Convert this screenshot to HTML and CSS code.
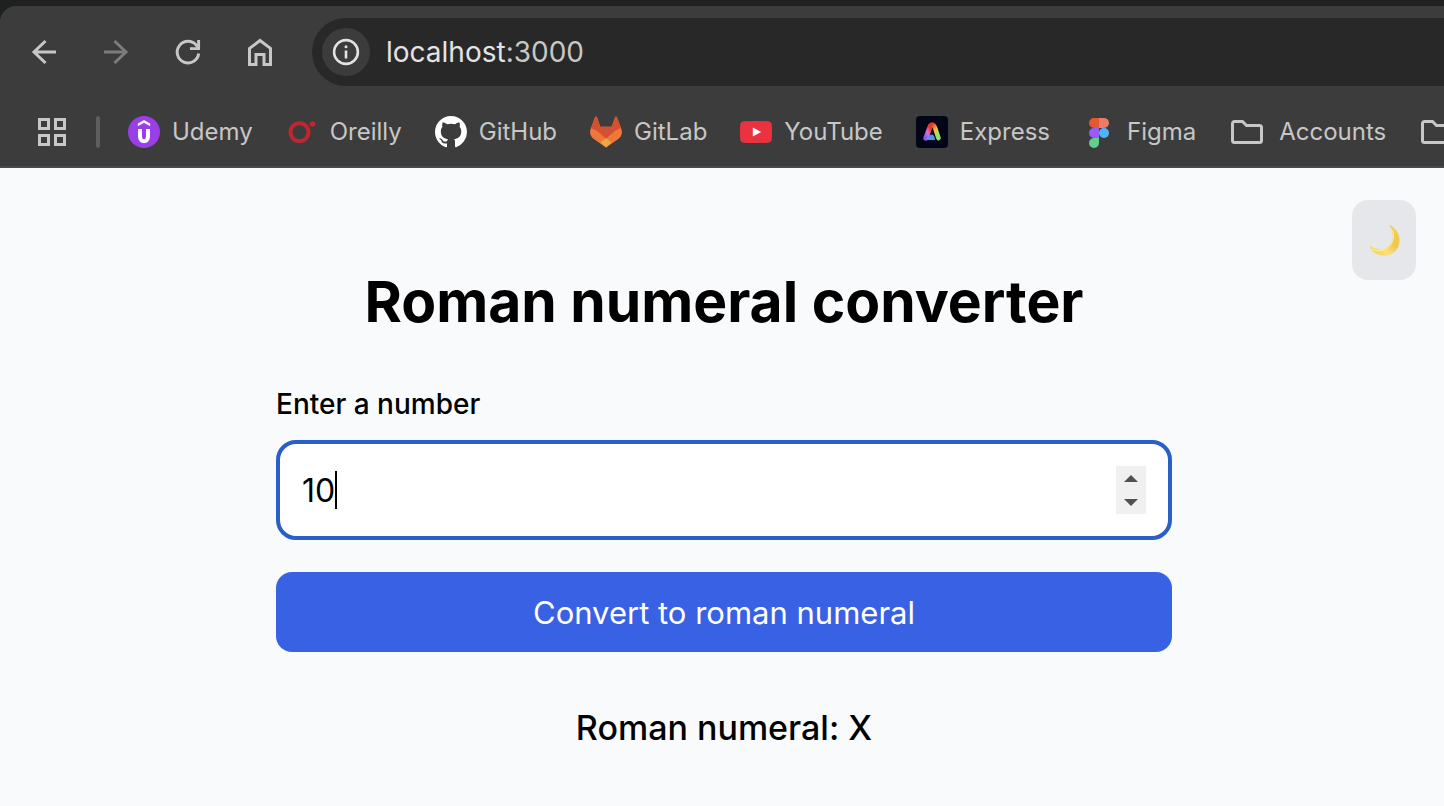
FILE: index.html
```html
<!DOCTYPE html>
<html lang="en">
<head>
<meta charset="utf-8">
<title>Roman numeral converter</title>
<link rel="stylesheet" href="styles.css">
</head>
<body>
<header class="browser">
  <div class="browser-panel">
    <div class="toolbar">
      <button class="nav-button" type="button" aria-label="Back">
        <svg width="32" height="32" viewBox="0 0 32 32" fill="none" stroke="currentColor" stroke-width="3"><path d="M28 16H6M17.500 5 6 16l11.500 11"/></svg>
      </button>
      <button class="nav-button nav-button-off" type="button" aria-label="Forward" disabled>
        <svg width="32" height="32" viewBox="0 0 32 32" fill="none" stroke="currentColor" stroke-width="3"><path d="M4 16h22M14.500 5 26 16 14.500 27"/></svg>
      </button>
      <button class="nav-button" type="button" aria-label="Reload">
        <svg width="32" height="32" viewBox="0 0 32 32" fill="none" stroke="currentColor" stroke-width="2.900"><path d="M26.700 17.500A10.800 10.800 0 1 1 24.600 9.600L26.500 12"/><path d="M26.600 4v8.600H18"/></svg>
      </button>
      <button class="nav-button" type="button" aria-label="Home">
        <svg width="32" height="32" viewBox="0 0 32 32" fill="none" stroke="currentColor" stroke-width="3"><path d="M5.500 28.500V12.400L16 4.500l10.500 7.900v16.100h-6.500V18.500h-8v10z"/></svg>
      </button>
      <div class="address">
        <span class="site-info">
          <svg width="28" height="28" viewBox="0 0 28 28" fill="none" stroke="currentColor"><circle cx="14" cy="14" r="11.900" stroke-width="2.600"/><path d="M14 12.500v8" stroke-width="2.600"/><circle cx="14" cy="8.800" r="1.500" fill="currentColor" stroke="none"/></svg>
        </span>
        <span class="url">localhost<span class="port">:3000</span></span>
      </div>
    </div>
    <nav class="bookmarks" aria-label="Bookmarks">
      <button class="apps" type="button" aria-label="Apps">
        <svg width="28" height="28" viewBox="0 0 28 28" fill="none" stroke="currentColor" stroke-width="3"><path d="M1.500 1.500h9v9h-9zM17.500 1.500h9v9h-9zM1.500 17.500h9v9h-9zM17.500 17.500h9v9h-9z"/></svg>
      </button>
      <span class="divider"></span>
      <a class="bookmark" href="#">
        <svg width="32" height="32" viewBox="0 0 32 32"><circle cx="16" cy="16" r="16" fill="#9a3fe8"/><path d="M10 9.800V7.800l6-3.500 6 3.500v2l-6-3.200z" fill="#fff" stroke="#fff" stroke-width=".5"/><path d="M12 13v7.500c0 6.300 8 6.300 8 0V13" fill="none" stroke="#fff" stroke-width="4"/></svg>
        <span>Udemy</span></a>
      <a class="bookmark" href="#">
        <svg width="32" height="32" viewBox="0 0 32 32"><circle cx="13.500" cy="16.200" r="9" fill="none" stroke="#be2732" stroke-width="4"/><circle cx="26.500" cy="8" r="2.800" fill="#be2732"/></svg>
        <span>Oreilly</span></a>
      <a class="bookmark" href="#">
        <svg width="32" height="32" viewBox="0 0 16 16" fill="#fff"><path d="M8 0C3.580 0 0 3.580 0 8c0 3.540 2.290 6.530 5.470 7.590.4.070.55-.17.55-.38 0-.19-.01-.82-.01-1.490-2.010.37-2.530-.49-2.690-.94-.09-.23-.48-.94-.82-1.130-.28-.15-.68-.52-.01-.53.63-.01 1.080.58 1.230.82.72 1.210 1.870.87 2.330.66.07-.52.28-.87.51-1.070-1.780-.2-3.640-.89-3.640-3.950 0-.87.31-1.590.82-2.150-.08-.2-.36-1.020.08-2.120 0 0 .67-.21 2.200.82a7.600 7.600 0 0 1 4 0c1.530-1.040 2.200-.82 2.200-.82.44 1.100.16 1.920.08 2.120.51.56.82 1.270.82 2.150 0 3.070-1.870 3.750-3.650 3.950.29.25.54.73.54 1.480 0 1.070-.01 1.930-.01 2.200 0 .21.15.46.55.38A8.010 8.010 0 0 0 16 8c0-4.420-3.580-8-8-8z"/></svg>
        <span>GitHub</span></a>
      <a class="bookmark" href="#">
        <svg width="32" height="32" viewBox="0 0 32 32"><path d="M1 12 5 1.200Q6 0 7 1.200L10.300 10.700h11.400L25 1.200q1-1.200 2 0L31 12q3 7-3.500 11.500L16 31.500 4.500 23.500Q-2 19 1 12z" fill="#ee7739"/><path d="M1 12 5 1.200Q6 0 7 1.200L10.300 10.700h11.400L25 1.200q1-1.200 2 0L31 12l-5.500 2.500L16 22.500 6.500 14.500z" fill="#d35033"/><path d="m16 22.300 5.500 4.200L16 31.500l-5.500-5z" fill="#eea743"/></svg>
        <span>GitLab</span></a>
      <a class="bookmark" href="#">
        <svg width="32" height="32" viewBox="0 0 32 32"><path d="M4 5.300Q16 4.700 28 5.300q3.500.2 3.800 4 .4 6.700 0 13.400-.3 3.800-3.800 4-12 .6-24 0-3.500-.2-3.800-4-.4-6.700 0-13.400.3-3.800 3.800-4z" fill="#ea333f"/><path d="m12.800 11.500 8.400 4.500-8.400 4.500z" fill="#fff"/></svg>
        <span>YouTube</span></a>
      <a class="bookmark" href="#">
        <svg width="32" height="32" viewBox="0 0 32 32"><defs><linearGradient id="ex-left" x1="0" y1="1" x2=".6" y2="0"><stop offset="0" stop-color="#815be8"/><stop offset=".5" stop-color="#e56be0"/><stop offset="1" stop-color="#eb3325"/></linearGradient><linearGradient id="ex-right" x1="0" y1="0" x2=".6" y2="1"><stop offset="0" stop-color="#eb3325"/><stop offset=".55" stop-color="#f5c542"/><stop offset="1" stop-color="#8be86a"/></linearGradient></defs><rect width="32" height="32" rx="4" fill="#020618"/><path d="M9.800 22.200 14.600 9.500" stroke="url(#ex-left)" stroke-width="5" stroke-linecap="round" fill="none"/><path d="M16 8.500c2.500 0 3.500 5 6.500 13.600" stroke="url(#ex-right)" stroke-width="4.600" stroke-linecap="round" fill="none"/><path d="M10 24c1-2.500 3-5.500 5.500-5.500 2 0 3.500 2 3.500 5.500z" fill="#5a8ded"/></svg>
        <span>Express</span></a>
      <a class="bookmark" href="#">
        <svg width="32" height="32" viewBox="0 0 32 32"><path d="M16 2h-5a5 5 0 0 0 0 10h5z" fill="#e35932"/><path d="M16 2h5a5 5 0 0 1 0 10h-5z" fill="#ee7b69"/><path d="M16 12h-5a5 5 0 0 0 0 10h5z" fill="#985cf6"/><circle cx="21" cy="17" r="5" fill="#50b4f9"/><path d="M11 22h5v5a5 5 0 1 1-5-5z" fill="#62cf8a"/></svg>
        <span>Figma</span></a>
      <a class="bookmark folder" href="#">
        <svg width="32" height="32" viewBox="0 0 32 32" fill="none" stroke="#c7c7c7" stroke-width="3"><path d="M3.500 5.500h8l4 4h13a2 2 0 0 1 2 2v13a2 2 0 0 1-2 2h-25a2 2 0 0 1-2-2v-17a2 2 0 0 1 2-2z"/></svg>
        <span>Accounts</span></a>
      <a class="bookmark folder" href="#" aria-label="Folder">
        <svg width="32" height="32" viewBox="0 0 32 32" fill="none" stroke="#c7c7c7" stroke-width="3"><path d="M3.500 5.500h8l4 4h13a2 2 0 0 1 2 2v13a2 2 0 0 1-2 2h-25a2 2 0 0 1-2-2v-17a2 2 0 0 1 2-2z"/></svg></a>
    </nav>
  </div>
</header>
<main class="page">
  <button class="theme-toggle" type="button" aria-label="Switch to dark mode">
    <svg width="32" height="32" viewBox="0 0 32 32"><defs><linearGradient id="moon" x1="0" y1="1" x2="1" y2="0"><stop offset="0" stop-color="#f4cf45"/><stop offset=".35" stop-color="#fae27a"/><stop offset=".6" stop-color="#efc64f"/><stop offset="1" stop-color="#f6d254"/></linearGradient></defs><path d="M21 .7C28 4 32 10 31.500 17.500 31 25.500 25 31.500 17 31.700 9.500 31.900 3.500 28 1 21c4 3.500 10 5 15.500 3.500C25 22 28 11 21 .7z" fill="url(#moon)"/><path d="M23.500 4.500c5.500 10-.5 21-11.500 22-3 .2-6-.5-8-1.700" fill="none" stroke="#fcef9d" stroke-width="1"/></svg>
  </button>
  <form class="converter" onsubmit="return false">
    <h1 class="title">Roman numeral converter</h1>
    <label class="label" for="number">Enter a number</label>
    <div class="field">
      <input class="number" id="number" type="number" value="10">
      <span class="caret"></span>
      <div class="stepper">
        <button class="step" type="button" aria-label="Increase"><svg width="14" height="7" viewBox="0 0 14 7"><path d="M0 7 7 0l7 7z" fill="#505050"/></svg></button>
        <button class="step" type="button" aria-label="Decrease"><svg width="14" height="7" viewBox="0 0 14 7"><path d="m0 0 7 7 7-7z" fill="#505050"/></svg></button>
      </div>
    </div>
    <button class="submit" type="submit">Convert to roman numeral</button>
    <output class="result" for="number">Roman numeral: X</output>
  </form>
</main>
</body>
</html>
```
FILE: styles.css
```css
* { box-sizing: border-box; }
body {
  margin: 0;
  min-height: 100vh;
  display: flex;
  flex-direction: column;
  overflow-x: hidden;
  background: #f9fafc;
  color: #000;
  font-family: Inter, "Liberation Sans", sans-serif;
}
button {
  padding: 0;
  border: 0;
  background: none;
  color: inherit;
  font: inherit;
}
svg { display: block; flex: none; }

.browser { padding-top: 6px; background: #1f2120; }
.browser-panel {
  overflow: hidden;
  border-top-left-radius: 16px;
  border-bottom: 2px solid #484a49;
  background: #3c3c3c;
  color: #c7c7c7;
}
.toolbar {
  display: flex;
  align-items: center;
  gap: 40px;
  padding: 12px 0 12px 28px;
}
.nav-button-off { color: #7c7c7c; }
.address {
  flex: 1;
  display: flex;
  align-items: center;
  gap: 16px;
  height: 68px;
  margin-left: -4px;
  padding-left: 10px;
  border-radius: 34px 0 0 34px;
  background: #282828;
}
.site-info {
  display: grid;
  place-items: center;
  width: 48px;
  height: 48px;
  border-radius: 50%;
  background: #3c3c3c;
  color: #e3e3e3;
}
.url { color: #e3e3e3; font-size: 28px; line-height: 36px; }
.port { color: #c7c7c7; }

.bookmarks {
  display: flex;
  align-items: center;
  gap: 33px;
  height: 68px;
  padding-left: 38px;
  white-space: nowrap;
}
.divider {
  flex: none;
  width: 4px;
  height: 32px;
  margin: 0 -5px 0 -3px;
  border-radius: 2px;
  background: #5e5e5e;
}
.bookmark {
  display: flex;
  align-items: center;
  gap: 12px;
  color: #c7c7c7;
  font-size: 24px;
  line-height: 32px;
  text-decoration: none;
}
.folder { gap: 16px; margin-left: 2px; }

.page { position: relative; flex: 1; padding: 98px 0 48px 4px; }
.theme-toggle {
  position: absolute;
  top: 32px;
  right: 28px;
  display: grid;
  place-items: center;
  width: 64px;
  height: 80px;
  border-radius: 16px;
  background: #e5e7eb;
}
.converter {
  display: flex;
  flex-direction: column;
  max-width: 896px;
  margin: 0 auto;
}
.title {
  margin: 0 0 46px;
  font-size: 57px;
  font-weight: 700;
  line-height: 72px;
  text-align: center;
}
.label {
  margin-bottom: 16px;
  font-size: 28px;
  font-weight: 500;
  line-height: 40px;
}
.field {
  position: relative;
  display: flex;
  align-items: center;
  height: 100px;
  margin-bottom: 32px;
  padding: 0 22px;
  border: 4px solid #285fc9;
  border-radius: 20px;
  background: #fff;
}
.number {
  flex: 1;
  min-width: 0;
  padding: 2px 0 0;
  border: 0;
  outline: 0;
  background: none;
  color: #000;
  font: 32px/48px Inter, "Liberation Sans", sans-serif;
  appearance: textfield;
}
.number::-webkit-inner-spin-button { appearance: none; margin: 0; }
.caret {
  position: absolute;
  top: 27px;
  left: 55px;
  width: 2px;
  height: 38px;
  background: #000;
}
.stepper {
  display: grid;
  width: 30px;
  height: 48px;
  background: #f0f0f0;
}
.step { display: grid; place-items: center; }
.submit {
  height: 80px;
  margin-bottom: 48px;
  padding-top: 2px;
  border-radius: 16px;
  background: #3861e3;
  color: #fff;
  font-size: 31px;
  line-height: 48px;
}
.result {
  font-size: 34px;
  font-weight: 500;
  line-height: 56px;
  text-align: center;
}
```
